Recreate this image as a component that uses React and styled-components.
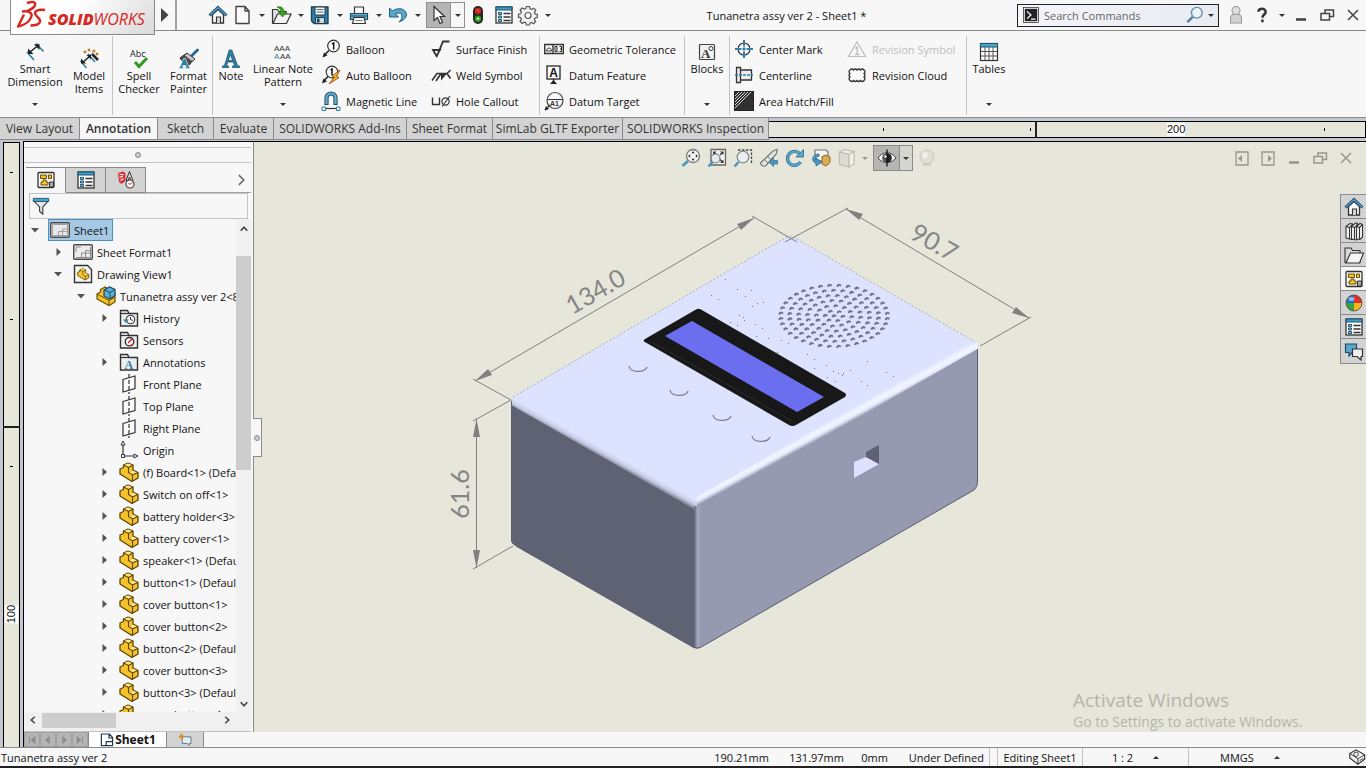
import React, { useState } from "react";
import styled, { createGlobalStyle } from "styled-components";

const INK = "#333333";
const BLUE = "#2f7fa6";
const GOLD = "#f3c22c";

/* ---------- icons, all drawn on a 20 x 20 grid ---------- */

const sheetArt = (
  <>
    <rect x="2" y="2.5" width="16" height="15" rx="1" fill="#f7f7f7" stroke={INK} strokeWidth="1.3" />
    <path d="M4.5 5h6v3.5h-6zM12.5 5h3v3.5h-3zM5 15v-3h2v-2h3v2h2v3z" fill={GOLD} stroke="#6b5000" />
    <path d="M13.5 12h4v5h-4z" fill="#aaa" stroke={INK} />
  </>
);

const listArt = (
  <>
    <rect x="2" y="2" width="16" height="16" fill="#fdfdfd" stroke={INK} strokeWidth="1.3" />
    <path d="M2 2h16v3H2z" fill="#3f9cc4" stroke="#1f5672" />
    <path d="M4.5 7.5h3v2h-3zM4.5 11h3v2h-3zM4.5 14.5h3v2h-3z" fill="#8cc8e4" stroke="#1f5672" />
    <path d="M9.5 8.5h7M9.5 12h7M9.5 15.5h7" stroke={INK} strokeWidth="1.3" />
  </>
);

const folderArt = (
  <>
    <path d="M1.5 18V2.5h7L10 5.500h8.500V18z" fill="#ededed" stroke={INK} strokeWidth="1.4" />
    <path d="M2 5.500h8" stroke={INK} strokeWidth="1.2" />
  </>
);

const partArt = (
  <>
    <path d="M1 7l3.5-1.5V3L9 1l5 2v5l5 2.500V16l-6 3.500L1 12z" fill={GOLD} stroke="#5f4600" strokeWidth="1.3" strokeLinejoin="round" />
    <path d="M5 3l4-1.500L13 3 9.500 4.900zM10.500 10.500L14 8.700l4 1.900-4.500 1.900z" fill="#fbe48e" />
    <path d="M4.500 3l5 2.500L14 3M9.500 5.500v5l4 2.500 5.500-2.500M13.500 13v6" fill="none" stroke="#5f4600" strokeWidth="1.1" />
  </>
);

const icons = {
  home: (
    <>
      <path d="M4.5 9.500V18h11V9.500L10 4.500z" fill="#fbfbfb" stroke={INK} strokeWidth="1.3" />
      <path d="M8.500 18v-6h4v6" fill="#ddd" stroke={INK} strokeWidth="1.2" />
      <path d="M1.500 10.500L10 2.500l8.500 8" fill="none" stroke="#1c4c66" strokeWidth="3" />
      <path d="M2 10L10 2.700l8 7.300" fill="none" stroke="#4f9dc0" strokeWidth="1.4" />
    </>
  ),
  doc: <path d="M4 1.500h9L17 6v12.500H4zM13 1.500V6h4" fill="#fbfbfb" stroke="#444" strokeWidth="1.4" strokeLinejoin="round" />,
  open: (
    <>
      <path d="M1.500 18V4.500h5l1.500 2h7V18z" fill="#dedede" stroke={INK} strokeWidth="1.2" />
      <path d="M2 18.500L6.500 9H20l-4.500 9.500z" fill="#f4f4f4" stroke={INK} strokeWidth="1.2" />
      <path d="M6 2c4-1 7 1 7 5h3l-4.500 5L7.500 7H10C10 4.500 8.500 3 6 2z" fill="#3aa524" stroke="#20760f" strokeWidth=".7" />
    </>
  ),
  save: (
    <>
      <path d="M1.500 2H18v16.500H4L1.500 16z" fill="#2f7fa6" stroke="#173f55" strokeWidth="1.3" />
      <path d="M5 2h10v8H5z" fill="#fafafa" stroke="#173f55" />
      <path d="M6.500 4.500h7M6.500 7h7" stroke="#666" />
      <path d="M5.500 12.500h9v6h-9z" fill="#d5d5d5" stroke="#173f55" />
      <path d="M7 13.500h2.500v4H7z" fill="#173f55" />
    </>
  ),
  print: (
    <>
      <path d="M5.500 9V2h9v7" fill="#fafafa" stroke={INK} strokeWidth="1.2" />
      <path d="M1.500 8.500h17v6h-17z" fill="#67afd0" stroke="#1c4c66" strokeWidth="1.2" />
      <path d="M2.500 11h15" stroke="#1c4c66" />
      <path d="M5 12.500h10l1.500 6h-13z" fill="#fafafa" stroke={INK} strokeWidth="1.1" />
      <path d="M6.500 15.500h7" stroke="#777" />
    </>
  ),
  undo: (
    <path d="M1.500 3v9h9L7.500 9c4-2 7-.5 6.500 3-.5 2-1.500 3.500-3 5 4.500-1.500 7-4 7.500-7C18.500 4 10.500 1.500 4.500 6z" fill="#5ba6cb" stroke="#1f5f80" />
  ),
  pointer: <path d="M5 1.500v14l3.500-3 2.500 6 2.500-1-2.500-6h4.500z" fill="#fff" stroke="#333" strokeWidth="1.2" />,
  lights: (
    <>
      <rect x="5" y="1" width="10" height="18" rx="5" fill="#252525" />
      <circle cx="10" cy="6" r="3.2" fill="#cf2418" />
      <path d="M9 4.500l2 2" stroke="#ff9c93" />
      <circle cx="10" cy="13.7" r="3.2" fill="#2d9b24" />
      <path d="M8.500 13.700h3M10 12.200v3" stroke="#b6ffa5" />
    </>
  ),
  list: listArt,
  gear: (
    <>
      <path d="M8.500 1.500h3l.6 2.300 1.500.6 2.100-1.200 2 2-1.200 2.200.6 1.500 2.200.6v3l-2.300.6-.6 1.500 1.200 2.100-2 2-2.200-1.200-1.500.6-.5 1.900h-3l-.6-2.200-1.500-.6-2.200 1.200-2-2 1.200-2.100-.6-1.500-2.200-.6v-3l2.200-.6.6-1.500-1.200-2.200 2-2 2.200 1.200 1.500-.6z" fill="#f0f0f0" stroke="#555" strokeWidth="1.2" />
      <circle cx="10" cy="10.500" r="3" fill="#fafafa" stroke="#555" strokeWidth="1.2" />
    </>
  ),
  dimension: (
    <>
      <path d="M2 10l7 8M11 1.500l7.500 8" stroke={BLUE} strokeWidth="1.7" />
      <path d="M4.500 10.500L13 3.500" stroke="#222" strokeWidth="1.6" />
      <path d="M3 12V6.500L8.500 12zM14.500 2v6L9 2.500z" fill="#222" />
    </>
  ),
  model: (
    <>
      <path d="M1.500 12l6 7M9 5l7 8" stroke={BLUE} strokeWidth="1.5" />
      <path d="M3 14l8-7" stroke="#222" strokeWidth="1.5" />
      <path d="M2 14.500v-5l5 5zM12 5.500v5L7.500 6z" fill="#222" />
      <path d="M12 4l7 7" stroke="#222" strokeWidth="2.500" />
      <path d="M11 3l2 2" stroke="#fff" strokeWidth="2" />
      <path d="M5 2h2v2H5zM9 0h2v2H9zM14 1h2v2h-2zM17 4h2v2h-2z" fill="#e09a2b" stroke="#a65a12" strokeWidth=".5" />
    </>
  ),
  spell: (
    <>
      <text x="1" y="8" fontSize="9" fontFamily="Open Sans, sans-serif" fill="#222">Abc</text>
      <path d="M6 13l4 4.500L18 9" fill="none" stroke="#2f9a20" strokeWidth="3" />
    </>
  ),
  painter: (
    <>
      <path d="M18.500 1l-6 6" stroke="#2a6e93" strokeWidth="3" strokeLinecap="round" />
      <path d="M8 4l8 6-4 3.500c-1 2-2 3-4 4.500L1 9z" fill="#4d4d4d" stroke="#222" />
      <path d="M8 4.500l7.500 5.500-2.500 2-7-5.500z" fill="#c9c9c9" />
      <path d="M4.500 9.500h2L10 18h1v1.500H6.500V18h1L7 16.500H4L3.500 18h1v1.500H0V18h1z" fill={BLUE} stroke="#f7f7f7" strokeWidth=".6" />
    </>
  ),
  note: (
    <path d="M8.200 1h2.600l5.700 15.500 2 .5v1.500h-7V17l2-.5-1.200-3.500H6.700L5.500 16.500l2 .5v1.500h-6V17l2-.5zM9.300 5.500L7.200 11.500h4.500z" fill={BLUE} stroke="#1d536f" strokeWidth=".8" fillRule="evenodd" />
  ),
  pattern: (
    <g fontSize="8" fontFamily="Liberation Sans, sans-serif" fill="#333">
      <text x="1" y="9">AAA</text>
      <text x="1" y="17" fill={BLUE}>A</text>
      <text x="7" y="17">AA</text>
    </g>
  ),
  balloon: (
    <>
      <circle cx="12.500" cy="7" r="5.800" fill="#fdfdfd" stroke={INK} strokeWidth="1.2" />
      <path d="M12.700 10.500V4L11 5" fill="none" stroke="#111" strokeWidth="1.5" />
      <path d="M8 11.500l-5 5" stroke="#222" strokeWidth="1.6" />
      <path d="M1.500 18.500l1.500-5 3.500 3z" fill="#222" />
    </>
  ),
  autoBalloon: (
    <>
      <circle cx="11" cy="7" r="5.800" fill="#fdfdfd" stroke={INK} strokeWidth="1.2" />
      <path d="M11 10.500V4L9.500 5" fill="none" stroke="#111" strokeWidth="1.5" />
      <path d="M7 11.500l-5 5" stroke="#222" strokeWidth="1.6" />
      <path d="M1 18.500l1.500-5 3.500 3z" fill="#222" />
      <path d="M19 5l-8 6 2.500 1L8 19l10-6.500-2.500-1z" fill="#f6b32c" stroke="#9a4e09" strokeWidth=".9" />
    </>
  ),
  magnet: (
    <>
      <path d="M5.500 14V7c0-6 9-6 9 0v7" fill="none" stroke="#1c4c66" strokeWidth="4.2" />
      <path d="M5.500 13V7c0-6 9-6 9 0v6" fill="none" stroke="#67afd0" strokeWidth="2.2" />
      <path d="M3.500 17.500h13" stroke={INK} strokeWidth="1.2" />
      <path d="M1 16h3.500v3.500H1zM15.500 16H19v3.500h-3.500z" fill="#fff" stroke={BLUE} />
    </>
  ),
  surface: <path d="M2 11h7l-3.500 6zM5.500 18L12 2.500h6.500" fill="none" stroke="#333" strokeWidth="1.8" />,
  weld: (
    <>
      <path d="M1 15.500l5-7h10M5 16l5-7.500M19.500 5L16 8.500l3.500 5" fill="none" stroke="#333" strokeWidth="1.6" />
      <path d="M10 8.500h6l-6 7z" fill="#333" />
    </>
  ),
  hole: (
    <>
      <path d="M1.500 6.500v7h7v-7" fill="none" stroke="#333" strokeWidth="1.4" />
      <circle cx="14.500" cy="10.500" r="3.6" fill="none" stroke="#333" strokeWidth="1.2" />
      <path d="M11 15.500L19 5" stroke="#333" strokeWidth="1.1" />
    </>
  ),
  tolerance: (
    <>
      <path d="M.7 5.500h18.600v9H.7zM9 5.500v9" fill="#fafafa" stroke={INK} strokeWidth="1.4" />
      <path d="M2.500 12c0-4 5-4 5 0z" fill="none" stroke="#333" />
      <path d="M11 7.500h2v5h-2zM14 12.500v.5M15.500 7.500h2v5h-2M16 10h1.500" fill="none" stroke="#222" />
    </>
  ),
  datumFeature: (
    <>
      <rect x="3" y="1" width="13" height="13" fill="#fafafa" stroke={INK} strokeWidth="1.4" />
      <text x="5.200" y="11.800" fontSize="12" fontWeight="700" fontFamily="Liberation Sans, sans-serif" fill="#111">A</text>
      <path d="M9.500 14v3" stroke="#222" strokeWidth="1.3" />
      <path d="M6 19l3.500-4 3.500 4z" fill="#222" />
    </>
  ),
  datumTarget: (
    <>
      <circle cx="11" cy="9.500" r="8" fill="#f7f7f7" stroke="#444" strokeWidth="1.2" />
      <path d="M3 8.500h16M6 14l-5 5" stroke="#333" strokeWidth="1.2" />
      <path d="M.5 19.500L2 15l3 3z" fill="#222" />
      <text x="6" y="15" fontSize="7" fontWeight="700" fontFamily="Liberation Sans, sans-serif" fill="#333">A1</text>
    </>
  ),
  blocks: (
    <>
      <rect x="2.500" y="2.500" width="15" height="15" rx="1" fill="#f1f1f1" stroke="#444" strokeWidth="1.2" />
      <text x="4" y="15.500" fontSize="13" fontWeight="700" fontFamily="Liberation Serif, serif" fill="#333">A</text>
      <circle cx="14" cy="6.500" r="2" fill="#fff" stroke="#333" />
    </>
  ),
  centerMark: (
    <>
      <circle cx="10" cy="10" r="6" fill="none" stroke="#333" strokeWidth="1.2" />
      <path d="M10 1v6.500M10 12.500V19M1 10h6.500M12.500 10H19M10 8.500v3M8.500 10h3" stroke={BLUE} strokeWidth="2" />
    </>
  ),
  centerline: (
    <>
      <path d="M2.500 2.500h4v15h-4zM6.500 5h11v10h-11z" fill="#ececec" stroke="#333" strokeWidth="1.3" />
      <path d="M1 10h18" stroke={BLUE} strokeWidth="1.4" strokeDasharray="3 1" />
    </>
  ),
  hatch: (
    <>
      <rect x=".5" y=".5" width="19" height="19" fill="#303030" stroke="#222" />
      <path d="M1 5l4-4M1 8l7-7M1 11L11 1M1 14L14 1M1 17L17 1" stroke="#d8d8d8" />
    </>
  ),
  revSymbol: (
    <>
      <path d="M10 3l8.500 14.500h-17z" fill="none" stroke="#bdbdbd" strokeWidth="1.2" />
      <path d="M10.200 15.500V8L8.500 9.500M8 15.500h4.500" fill="none" stroke="#bdbdbd" strokeWidth="1.3" />
    </>
  ),
  cloud: (
    <path d="M3 5q1.750-2 3.500 0q1.750-2 3.500 0q1.750-2 3.500 0q1.750-2 3.500 0q2 1.750 0 3.500q2 1.750 0 3.500q2 1.750 0 3.500q-1.750 2-3.500 0q-1.750 2-3.500 0q-1.750 2-3.500 0q-1.750 2-3.500 0q-2-1.750 0-3.500q-2-1.750 0-3.500q-2-1.750 0-3.500z" fill="#fafafa" stroke="#333" strokeWidth="1.3" />
  ),
  tables: (
    <>
      <rect x="1.500" y="1.500" width="17" height="17" fill="#fdfdfd" stroke={INK} strokeWidth="1.2" />
      <path d="M1.500 1.500h17V5h-17z" fill="#47a5cb" stroke="#1f5672" />
      <path d="M2 9.500h16M2 14h16M6 5v13M10 5v13M14 5v13" stroke="#555" />
    </>
  ),
  command: (
    <>
      <rect x="2.500" y="2.500" width="15" height="15" fill="#222" stroke="#fff" />
      <rect x="1.700" y="1.700" width="16.600" height="16.600" fill="none" stroke="#222" strokeWidth=".8" />
      <path d="M5.500 6l4.500 4-4.500 4M10 14.500h5" fill="none" stroke="#fff" strokeWidth="1.4" />
    </>
  ),
  magnify: (
    <>
      <circle cx="12" cy="7.500" r="6" fill="#eaf4fb" stroke="#6d8fae" strokeWidth="1.6" />
      <path d="M7.500 12l-6 6" stroke="#4f7da4" strokeWidth="2.600" />
    </>
  ),
  person: (
    <>
      <path d="M4.500 18v-4.500c0-3 2-4.500 5.500-4.500s5.500 1.500 5.500 4.500V18z" fill="#d2d2d2" stroke="#999" strokeWidth="1.1" />
      <circle cx="10" cy="5.500" r="4" fill="#dedede" stroke="#999" strokeWidth="1.1" />
    </>
  ),
  help: <path d="M6 6.500c0-5 8.500-4.500 8 .5-.3 2.500-3.500 2.700-3.500 6M10.500 15v3" fill="none" stroke="#333" strokeWidth="2.800" />,
  minimize: <path d="M5 14.500h10" stroke="currentColor" strokeWidth="2.600" />,
  restore: (
    <path d="M4 8.500h8.500V15H4zM8 8V5h8.500v6.500H13" fill="none" stroke="currentColor" strokeWidth="1.5" />
  ),
  close: <path d="M5 5l10 10M15 5L5 15" stroke="currentColor" strokeWidth="1.5" />,
  dockLeft: (
    <>
      <path d="M4 4h12v13H4z" fill="none" stroke="currentColor" strokeWidth="1.3" />
      <path d="M6 10.500L10 7v7z" fill="currentColor" />
    </>
  ),
  dockRight: (
    <>
      <path d="M4 4h12v13H4z" fill="none" stroke="currentColor" strokeWidth="1.3" />
      <path d="M14 10.500L10 7v7z" fill="currentColor" />
    </>
  ),
  zoomFit: (
    <>
      <path d="M7 13l-5.500 5" stroke="#4b98bf" strokeWidth="2.800" />
      <circle cx="12" cy="8" r="6.500" fill="#f3f5f2" stroke="#777" strokeWidth="1.3" />
      <path d="M12 3l1.700 2.200h-3.400zM12 13l1.700-2.200h-3.400zM7 8l2.200-1.700v3.400zM17 8l-2.200-1.700v3.400z" fill="#333" />
    </>
  ),
  zoomArea: (
    <>
      <path d="M4 1.500h14.500V17H4z" fill="#f3f3f0" stroke="#666" strokeWidth="1.3" />
      <path d="M6 3.500h3.500L6 7zM16.500 3.500V7L13 3.500zM16.500 15v-3.500L13 15z" fill="#333" />
      <path d="M7 4.500L9.500 7M15.500 4.500L13 7M15.500 14L13 11.500" stroke="#333" strokeWidth="1.3" />
      <path d="M5.500 14l-4 4.500" stroke="#4b98bf" strokeWidth="2.600" />
      <circle cx="8.500" cy="10.500" r="4.500" fill="#dfe9ee" stroke="#777" strokeWidth="1.2" />
    </>
  ),
  zoomSelect: (
    <>
      <path d="M5 2h13.500v14" fill="none" stroke="#444" strokeWidth="1.3" strokeDasharray="2.500 1.500" />
      <path d="M5.500 14l-4 4.500" stroke="#4b98bf" strokeWidth="2.600" />
      <circle cx="10" cy="9" r="5.800" fill="#e9eff0" stroke="#888" strokeWidth="1.3" />
    </>
  ),
  prevView: (
    <>
      <path d="M1.500 15L14 3l4-1.500-.5 4L7 17.500c-2 1.500-5.500 0-5.500-2.500z" fill="#e4e4e0" stroke="#777" strokeWidth="1.2" />
      <path d="M8.500 8l3.500 4M5 11l4 4" stroke="#777" />
      <path d="M18.500 12.500v3.500h-4v2.500L10 14.200l4.500-4.200v2.500z" fill="#4b98bf" stroke="#2a6c8e" strokeWidth=".7" />
    </>
  ),
  rotate: (
    <>
      <path d="M14.500 5.500A7 7 0 1015.500 14" fill="none" stroke="#2a6c8e" strokeWidth="3.400" />
      <path d="M14.500 5.500A7 7 0 1015.500 14" fill="none" stroke="#5ba6cb" strokeWidth="2" />
      <path d="M18.500 1.500v7.500H11z" fill="#5ba6cb" stroke="#2a6c8e" strokeWidth=".8" />
    </>
  ),
  section: (
    <>
      <path d="M4 2h11l2 2v9H4z" fill="#f7f7f4" stroke="#777" strokeWidth="1.2" />
      <path d="M11 8.500L15 7l4 2v5.500L15 18l-4-2z" fill="#d9ad52" stroke="#8b6828" />
      <path d="M8 6C1 6-.5 13 5 15.500V18l6-4-6-4v2.500C3.500 10.500 5 8.500 8 8.500z" fill="#4b98bf" stroke="#2a6c8e" strokeWidth=".8" />
    </>
  ),
  cube: (
    <g stroke="#bdbdb4" strokeWidth="1.2">
      <path d="M2.500 4l5-2.500 9.500 2-5 3z" fill="#ededE6" />
      <path d="M2.500 4l9.500 2.500V19l-9.500-2.500z" fill="#dcdcd5" />
      <path d="M12 6.500l5-3V16l-5 3z" fill="#f1f1ea" />
    </g>
  ),
  eye: (
    <>
      <path d="M1 10c4.500-7 13.500-7 18 0-4.500 6-13.500 6-18 0z" fill="#f5f5f5" stroke="#444" />
      <path d="M10 5.200a4.800 4.800 0 000 9.600z" fill="#555" />
      <path d="M10 5.200a4.800 4.800 0 010 9.600z" fill="#222" />
      <path d="M10 1.500v17" stroke="#111" strokeWidth="1.3" />
      <circle cx="8.500" cy="8.500" r="1.200" fill="#eee" />
    </>
  ),
  sphere: (
    <>
      <circle cx="10" cy="9" r="7" fill="#dedfd6" stroke="#c9c9c0" />
      <circle cx="8" cy="7" r="3" fill="#eeeee8" />
      <path d="M6 16.500h8" stroke="#c9c9c0" strokeWidth="2" />
    </>
  ),
  books: (
    <g fill="#f4f4f4" stroke={INK} strokeWidth="1.1">
      <path d="M2 5.500l4-3 2.500.5v15.500h-1L2 17z" />
      <path d="M7.500 5.500l4-3.500 2 .5v15.500L12 19l-4.500-1z" />
      <path d="M12.500 5.500l3.500-3 2.500 1V16L16 18.500l-3.500-.5z" />
      <path d="M2 5.500l3.500 1L8.500 3M5.500 6.500V18M7.500 5.500l3 1L13.500 3M10.500 6.500v12M12.500 5.500l3 1 3-3M15.500 6.500v12" fill="none" />
    </g>
  ),
  folderOpen: (
    <>
      <path d="M1 17.500V3h6l1.500 2.500H16v12z" fill="#d7d7d7" stroke={INK} strokeWidth="1.1" />
      <path d="M2 18L6.500 8h13l-4 10z" fill="#f5f5f5" stroke={INK} strokeWidth="1.1" />
    </>
  ),
  sheet: sheetArt,
  appearance: (
    <>
      <path d="M10 10V2a8 8 0 00-8 8z" fill="#2b6cc9" />
      <path d="M10 10V2a8 8 0 018 8z" fill="#e0302a" />
      <path d="M10 10h8a8 8 0 01-8 8z" fill="#f2b822" />
      <path d="M10 10v8a8 8 0 01-8-8z" fill="#35a53c" />
      <circle cx="10" cy="10" r="8" fill="none" stroke="#444" strokeWidth=".8" />
      <ellipse cx="7.500" cy="6" rx="3" ry="2" fill="#fff" opacity=".5" />
    </>
  ),
  chat: (
    <>
      <path d="M1.500 3h11v8.500H8L5 15v-3.500H1.500z" fill="#5ba6cb" stroke="#1c4c66" strokeWidth="1.2" />
      <path d="M8.500 8h10v7.500H17V19l-4-3.500H8.500z" fill="#f0f0f0" stroke={INK} strokeWidth="1.2" />
    </>
  ),
  dimxpert: (
    <>
      <path d="M2 3l5-1.500L9.500 3v8L5.500 14 3 12z" fill="#de2f35" />
      <path d="M3.500 4.500h4M3.500 7.500L7 6M4.500 10.500l3-2" fill="none" stroke="#fff" strokeWidth="1.2" />
      <path d="M13.500 1.500l3.500 9h-2L13.500 7 12 10.500h-2z" fill="#d9d9d9" stroke="#333" />
      <circle cx="14" cy="14" r="4" fill="#f4f4f4" stroke="#444" strokeWidth="1.2" />
      <path d="M12.500 13l1.500 1.500 2.500-2.500" fill="none" stroke="#d22" />
    </>
  ),
  funnel: (
    <>
      <path d="M2 4.500h16L12 11v8l-3.500-3v-5z" fill="#e6e6e6" stroke={INK} strokeWidth="1.2" />
      <path d="M1.500 1.500h17V5h-17z" fill="#4aa3ca" stroke="#1f5672" />
    </>
  ),
  treeSheet: (
    <>
      <rect x=".7" y="2.700" width="18.600" height="14.600" rx="1" fill="#e8e8e8" stroke="#4b4b4b" strokeWidth="1.4" />
      <path d="M2.500 4.500h15v11h-15zM8.500 15.500v-4h9M12.500 9v6.500M12.500 9h5" fill="none" stroke="#a0a0a0" />
    </>
  ),
  treeFormat: (
    <>
      <rect x=".7" y="2.700" width="18.600" height="14.600" rx="1" fill="#ececec" stroke="#4b4b4b" strokeWidth="1.4" />
      <path d="M3 10V5h5M8.500 15.500V11h9M12.500 8.500v7M12.500 8.500h5M3 15.500h14.500V5" fill="none" stroke="#8d8d8d" />
    </>
  ),
  drawingView: (
    <>
      <path d="M1.500 1.500h13l4 4v13h-17z" fill="#f5f5f5" stroke={INK} strokeWidth="1.4" />
      <g transform="translate(4 4) scale(.62)">{partArt}</g>
    </>
  ),
  assembly: (
    <>
      <path d="M1 8l3.500-2V3.500L9 1l10 6v9l-6 3.500L1 13z" fill={GOLD} stroke="#705000" strokeWidth="1.2" />
      <path d="M1 8l12 6.500 6-3.500M13 14.500v5" fill="none" stroke="#705000" />
      <path d="M8 4l5.500-3L19 3.500v6L14 13l-6-3z" fill="#5fb0d8" stroke="#1c4c66" strokeWidth="1.2" />
      <path d="M8 4l6 2.500V13M14 6.500l5-3" fill="none" stroke="#1c4c66" />
    </>
  ),
  history: (
    <>
      {folderArt}
      <circle cx="11.500" cy="11.500" r="4.200" fill="#fff" stroke="#555" strokeWidth="1.3" />
      <path d="M11.500 9v2.500l2.500 1" fill="none" stroke="#333" />
      <path d="M4 11.500h6L7 15z" fill={BLUE} />
    </>
  ),
  sensors: (
    <>
      {folderArt}
      <circle cx="10.500" cy="11.700" r="4.200" fill="#fff" stroke="#333" strokeWidth="1.4" />
      <path d="M9 13l4-4" stroke="#d22" strokeWidth="1.5" />
      <path d="M10 15.500h4v-2z" fill="#d22" />
    </>
  ),
  annotations: (
    <>
      {folderArt}
      <text x="5.500" y="16.500" fontSize="12" fontWeight="700" fontFamily="Liberation Serif, serif" fill={BLUE}>A</text>
    </>
  ),
  plane: (
    <>
      <path d="M4 5.500L16 2v12.500L4 18z" fill="#fafafa" stroke="#333" strokeWidth="1.2" />
      <path d="M10 0v20" stroke="#333" strokeWidth="1.2" strokeDasharray="4 2" />
    </>
  ),
  origin: (
    <>
      <path d="M4 4v12M4 16h12" stroke="#333" strokeWidth="1.2" />
      <path d="M4 1l2 4H2zM19 16l-4-2v4zM2.500 14.500h3v3h-3z" fill="#fff" stroke="#333" />
    </>
  ),
  part: partArt,
  sheetTab: (
    <path d="M3 2.500h10L17 7v10H3zM12.500 3v4.500H17M9 17v-5h8" fill="#fff" stroke="#1d3a56" strokeWidth="1.5" />
  ),
  addSheet: (
    <>
      <path d="M6 5.500h12.500V15H16v2.500L13.500 15H6z" fill="#e4eef2" stroke="#456d84" strokeWidth="1.2" />
      <path d="M5 1v8M1 5h8M2.500 2.500l5 5M7.500 2.500l-5 5" stroke="#e08b1c" strokeWidth="1.5" />
    </>
  ),
  tag: (
    <>
      <path d="M2 6l7-4 9.500 5.500v5L11 18l-9-7z" fill="#f1f1f1" stroke="#333" strokeWidth="1.3" />
      <path d="M2 6l9 6v6M11 12l7.500-4.500" fill="none" stroke="#333" />
      <circle cx="9" cy="7" r="2.500" fill="none" stroke="#333" />
      <path d="M13 14l4-2.500" stroke="#333" />
    </>
  ),
  chevronRight: <path d="M7 3l7 7-7 7" fill="none" stroke="#666" strokeWidth="2.200" />,
  chevronLeft: <path d="M13 4.500L7 10l6 5.500" fill="none" stroke="#444" strokeWidth="2.600" />,
  chevronUp: <path d="M4.500 13L10 7l5.500 6" fill="none" stroke="#444" strokeWidth="2.600" />,
  chevronDown: <path d="M4.500 7l5.500 6 5.500-6" fill="none" stroke="#444" strokeWidth="2.600" />,
  first: <path d="M15 4v12l-7-6zM5.500 4v12" fill="#8e8e8e" stroke="#8e8e8e" strokeWidth="1.5" />,
  prev: <path d="M13 3v14l-8-7z" fill="#8e8e8e" />,
  next: <path d="M7 3v14l8-7z" fill="#8e8e8e" />,
  last: <path d="M5 4v12l7-6zM14.500 4v12" fill="#8e8e8e" stroke="#8e8e8e" strokeWidth="1.5" />,
};

const Icon = ({ name, size = 20 }) => (
  <IconSvg width={size} height={size} viewBox="0 0 20 20" aria-hidden="true">
    {icons[name]}
  </IconSvg>
);

/* ---------- data ---------- */

const quickTools = [
  { name: "home" },
  { name: "doc", menu: true },
  { name: "open", menu: true },
  { name: "save", menu: true },
  { name: "print", menu: true },
  { name: "undo", menu: true },
];

const tabs = [
  ["View Layout", 80],
  ["Annotation", 78],
  ["Sketch", 56],
  ["Evaluate", 60],
  ["SOLIDWORKS Add-Ins", 133],
  ["Sheet Format", 86],
  ["SimLab GLTF Exporter", 130],
  ["SOLIDWORKS Inspection", 146],
];

const tree = [
  { level: 0, arrow: "down", icon: "treeSheet", label: "Sheet1", selected: true },
  { level: 1, arrow: "right", icon: "treeFormat", label: "Sheet Format1" },
  { level: 1, arrow: "down", icon: "drawingView", label: "Drawing View1" },
  { level: 2, arrow: "down", icon: "assembly", label: "Tunanetra assy ver 2<8>" },
  { level: 3, arrow: "right", icon: "history", label: "History" },
  { level: 3, icon: "sensors", label: "Sensors" },
  { level: 3, arrow: "right", icon: "annotations", label: "Annotations" },
  { level: 3, icon: "plane", label: "Front Plane" },
  { level: 3, icon: "plane", label: "Top Plane" },
  { level: 3, icon: "plane", label: "Right Plane" },
  { level: 3, icon: "origin", label: "Origin" },
  { level: 3, arrow: "right", icon: "part", label: "(f) Board<1> (Default)" },
  { level: 3, arrow: "right", icon: "part", label: "Switch on off<1>" },
  { level: 3, arrow: "right", icon: "part", label: "battery holder<3>" },
  { level: 3, arrow: "right", icon: "part", label: "battery cover<1>" },
  { level: 3, arrow: "right", icon: "part", label: "speaker<1> (Default)" },
  { level: 3, arrow: "right", icon: "part", label: "button<1> (Default)" },
  { level: 3, arrow: "right", icon: "part", label: "cover button<1>" },
  { level: 3, arrow: "right", icon: "part", label: "cover button<2>" },
  { level: 3, arrow: "right", icon: "part", label: "button<2> (Default)" },
  { level: 3, arrow: "right", icon: "part", label: "cover button<3>" },
  { level: 3, arrow: "right", icon: "part", label: "button<3> (Default)" },
  { level: 3, arrow: "right", icon: "part", label: "cover button<4>" },
];

const viewTools = ["zoomFit", "zoomArea", "zoomSelect", "prevView", "rotate", "section"];
const windowTools = ["dockLeft", "dockRight", "minimize", "restore", "close"];
const taskTools = ["home", "books", "folderOpen", "sheet", "appearance", "list", "chat"];

// speaker grille: rings of holes, six more on every ring
const holes = [[834, 316]];
for (let ring = 1; ring <= 6; ring++) {
  for (let i = 0; i < ring * 6; i++) {
    const a = (i / (ring * 6)) * Math.PI * 2 + 0.09;
    holes.push([834 + Math.cos(a) * ring * 8.9, 316 + Math.sin(a) * ring * 5.1]);
  }
}

const specks = [
  [725, 279], [737, 289], [745, 296], [751, 290], [711, 295], [718, 299], [752, 306], [757, 303],
  [763, 302], [743, 317], [739, 315], [730, 322], [737, 325], [744, 320], [755, 324], [762, 328],
  [768, 338], [756, 336], [781, 340], [788, 343], [777, 352], [807, 354], [814, 359], [826, 365],
  [833, 371], [843, 373], [842, 375], [838, 373], [850, 370], [861, 381], [867, 361], [867, 385],
  [886, 372], [893, 376], [827, 377], [835, 381], [814, 368],
];

/* ---------- drawing view ---------- */

const Model = () => (
  <ModelSvg viewBox="254 142 1112 590" role="img" aria-label="Drawing View1">
    <defs>
      <linearGradient id="edgeRight" gradientUnits="userSpaceOnUse" x1="832" y1="418" x2="838" y2="429">
        <stop offset="0" stopColor="#dde3ff" />
        <stop offset=".45" stopColor="#f2f7ff" />
        <stop offset=".7" stopColor="#e3e9fb" />
        <stop offset="1" stopColor="#969ab1" />
      </linearGradient>
      <linearGradient id="edgeLeft" gradientUnits="userSpaceOnUse" x1="606" y1="450" x2="601" y2="459">
        <stop offset="0" stopColor="#dde3ff" />
        <stop offset=".45" stopColor="#c6cce4" />
        <stop offset="1" stopColor="#5f6272" />
      </linearGradient>
      <linearGradient id="edgeFront" x1="0" x2="1" y1="0" y2="0">
        <stop offset="0" stopColor="#5f6272" />
        <stop offset=".5" stopColor="#a5a9bf" />
        <stop offset="1" stopColor="#969ab1" />
      </linearGradient>
    </defs>
    <path d="M516 395L785 238Q790 236 795 238L973 341Q977 343 977 349L697 512L511 406V401z" fill="#dde3ff" />
    <path d="M511 403L697 509V648.500Q694 648.500 691 646L514 545Q511 543 511 540z" fill="#5f6272" />
    <path d="M697 509L977 348V484Q977 488 974 490L700 648Q698 649 697 648.500z" fill="#969ab1" />
    <path d="M512 397L697 501V511L511 405V399z" fill="url(#edgeLeft)" />
    <path d="M697 497L974 339Q978 342 977.500 349L697 510z" fill="url(#edgeRight)" />
    <path d="M694 506h7v141l-4 1.500-3-1.500z" fill="url(#edgeFront)" />
    <path d="M511.500 401V541L516 546L691 646Q697 650 703 646L974 490Q977.500 487 977.500 482V349" fill="none" stroke="#5b5e70" />
    <path d="M513 397L785 238Q790 235 795 238L975 342" fill="none" stroke="#a7abb9" strokeDasharray="2 2" />

    <g fill="#6f7386">
      {holes.map(([x, y], i) => (
        <path key={i} d={`M${x - 2.5} ${y + 1}q.3-2.500 2.700-2.700q1.800 0 2.600 1.500l-1.300 1.300l-1-1l-1 1.500z`} />
      ))}
      {specks.map(([x, y]) => (
        <rect key={`${x}-${y}`} x={x} y={y} width="1" height="1" />
      ))}
    </g>

    <path d="M644 341.500Q643 340 645 339L696 309.500Q698 308 701 309.500L845 393Q847 395 845 397L796 425Q792 427 789 425z" fill="#181818" />
    <path d="M652 342L792 421" fill="none" stroke="#2c2c2c" />
    <path d="M665 336L692 321L824 397L797 412z" fill="#6c6ef0" />

    <g fill="none" stroke="#7b7f94" strokeWidth="1.3">
      <path d="M629 366c1 7 16 7 18 1" />
      <path d="M670 390c1 7 16 7 18 1" />
      <path d="M713 415c1 7 16 7 18 1" />
      <path d="M752 436c1 7 16 7 18 1" />
    </g>
    <path d="M854 462L866 457L879 464L854 478z" fill="#dde3ff" />
    <path d="M866 452L879 445V464L866 457z" fill="#5f6272" />

    <g fill="none" stroke="#808080">
      <path d="M475 381L754 218M473 379L511 400M752 216L797 242" />
      <path d="M846 209L1029 318M785 242L848 208M980 346L1031 317" />
      <path d="M476.500 419V568M473 421L511 400M473 569L513 546" />
    </g>
    <g fill="#808080">
      <path d="M475 381L488 369L492 375zM754 218L741 230L737 224z" />
      <path d="M846 209L863 214L859 220zM1029 318L1012 313L1016 307z" />
      <path d="M476.500 419L480 437H473zM476.500 568L480 550H473z" />
    </g>
    <DimText transform="translate(600 299) rotate(-30)">134.0</DimText>
    <DimText transform="translate(930 250) rotate(30)">90.7</DimText>
    <DimText transform="translate(469 494) rotate(-90)">61.6</DimText>
  </ModelSvg>
);

/* ---------- app ---------- */

const Tool = ({ icon, lines, menu, width }) => (
  <BigTool $w={width} $menu={menu}>
    <Icon name={icon} />
    {lines.map((line) => (
      <span key={line}>{line}</span>
    ))}
    {menu && <Caret $bottom />}
  </BigTool>
);

const Row = ({ icon, label, disabled }) => (
  <SmallTool disabled={disabled}>
    <Icon name={icon} />
    {label}
  </SmallTool>
);

export default function App() {
  const [activeTab, setActiveTab] = useState("Annotation");
  const [search, setSearch] = useState("");
  const [filter, setFilter] = useState("");

  return (
    <Window>
      <GlobalStyle />
      <TitleBar>
        <LogoBox>
          <svg width="30" height="30" viewBox="0 0 30 30" aria-hidden="true">
            <g fill="none" stroke="#d5281f" strokeWidth="2.400" strokeLinejoin="round">
              <path d="M11 3c6-2 9-1 8 2C18 8 15 9.500 11 11" />
              <path d="M6 11.500c8-1 11.500 2 8.500 7C12 23 7 25.500 2 26.500l6-12" />
              <path d="M29 10c-8-1-11 1.500-9.500 4.500C21 17.500 25 19 24 22c-1 2.500-4.500 3.500-9.500 3.500" />
            </g>
          </svg>
          <Brand>
            <b>SOLID</b>WORKS
          </Brand>
        </LogoBox>
        <Expander aria-label="Show menu">
          <svg width="8" height="14" viewBox="0 0 8 14">
            <path d="M0 0l7.500 7L0 14z" fill="#444" />
          </svg>
        </Expander>
        <QuickBar>
          {quickTools.map((tool) => (
            <React.Fragment key={tool.name}>
              <QuickButton aria-label={tool.name} $single={!tool.menu}>
                <Icon name={tool.name} />
              </QuickButton>
              {tool.menu && (
                <CaretButton aria-label={`${tool.name} menu`}>
                  <Caret />
                </CaretButton>
              )}
            </React.Fragment>
          ))}
          <SelectGroup>
            <button aria-label="Select">
              <Icon name="pointer" />
            </button>
            <button aria-label="Select menu">
              <Caret />
            </button>
          </SelectGroup>
          <QuickButton aria-label="Rebuild" $single>
            <Icon name="lights" />
          </QuickButton>
          <QuickButton aria-label="File properties" $single>
            <Icon name="list" />
          </QuickButton>
          <QuickButton aria-label="Options">
            <Icon name="gear" />
          </QuickButton>
          <CaretButton aria-label="Options menu">
            <Caret />
          </CaretButton>
        </QuickBar>
        <DocTitle>Tunanetra assy ver 2 - Sheet1 *</DocTitle>
        <SearchBox>
          <Icon name="command" size={18} />
          <input
            aria-label="Search Commands"
            placeholder="Search Commands"
            value={search}
            onChange={(e) => setSearch(e.target.value)}
          />
          <Icon name="magnify" size={18} />
          <Caret />
        </SearchBox>
        <WindowButtons>
          <button aria-label="Login">
            <Icon name="person" />
          </button>
          <button aria-label="Help">
            <Icon name="help" size={18} />
          </button>
          <CaretButton aria-label="Help menu">
            <Caret />
          </CaretButton>
          <button aria-label="Minimize">
            <Icon name="minimize" />
          </button>
          <button aria-label="Restore">
            <Icon name="restore" />
          </button>
          <button aria-label="Close">
            <Icon name="close" />
          </button>
        </WindowButtons>
      </TitleBar>

      <Ribbon>
        <Group $w={113}>
          <Tool icon="dimension" lines={["Smart", "Dimension"]} menu width={70} />
          <Tool icon="model" lines={["Model", "Items"]} width={38} />
        </Group>
        <Group>
          <Tool icon="spell" lines={["Spell", "Checker"]} width={52} />
          <Tool icon="painter" lines={["Format", "Painter"]} width={47} />
        </Group>
        <Group>
          <Tool icon="note" lines={["Note"]} width={36} />
          <Tool icon="pattern" lines={["Linear Note", "Pattern"]} menu width={68} />
          <Column $w={110}>
            <Row icon="balloon" label="Balloon" />
            <Row icon="autoBalloon" label="Auto Balloon" />
            <Row icon="magnet" label="Magnetic Line" />
          </Column>
          <Column $w={112}>
            <Row icon="surface" label="Surface Finish" />
            <Row icon="weld" label="Weld Symbol" />
            <Row icon="hole" label="Hole Callout" />
          </Column>
        </Group>
        <Group>
          <Column $w={144}>
            <Row icon="tolerance" label="Geometric Tolerance" />
            <Row icon="datumFeature" label="Datum Feature" />
            <Row icon="datumTarget" label="Datum Target" />
          </Column>
        </Group>
        <Group>
          <Tool icon="blocks" lines={["Blocks"]} menu width={44} />
        </Group>
        <Group>
          <Column $w={113}>
            <Row icon="centerMark" label="Center Mark" />
            <Row icon="centerline" label="Centerline" />
            <Row icon="hatch" label="Area Hatch/Fill" />
          </Column>
          <Column $w={123}>
            <Row icon="revSymbol" label="Revision Symbol" disabled />
            <Row icon="cloud" label="Revision Cloud" />
          </Column>
        </Group>
        <Group $last>
          <Tool icon="tables" lines={["Tables"]} menu width={44} />
        </Group>
      </Ribbon>

      <TabRow>
        {tabs.map(([label, width]) => (
          <Tab key={label} $w={width} $active={label === activeTab} onClick={() => setActiveTab(label)}>
            {label}
          </Tab>
        ))}
        <TopRuler>
          <TickX $at={114} />
          <TickX $at={261} />
          <Split $at={266} />
          <RulerLabel $at={398}>200</RulerLabel>
          <TickX $at={555} />
        </TopRuler>
      </TabRow>

      <Main>
        <SideRulerWrap>
          <SideRuler>
            <TickY $at={29} />
            <TickY $at={176} />
            <SplitY $at={283} />
            <TickY $at={323} />
            <SideLabel $at={462}>100</SideLabel>
          </SideRuler>
        </SideRulerWrap>
        <Stack>
          <Workspace>
            <Panel>
              <PanelGrip>
                <i />
              </PanelGrip>
              <PanelTabs>
                <PanelTab $active aria-label="FeatureManager">
                  <Icon name="sheet" />
                </PanelTab>
                <PanelTab aria-label="Properties">
                  <Icon name="list" />
                </PanelTab>
                <PanelTab aria-label="DimXpert">
                  <Icon name="dimxpert" />
                </PanelTab>
                <MoreButton aria-label="More tabs">
                  <Icon name="chevronRight" size={14} />
                </MoreButton>
              </PanelTabs>
              <FilterBox>
                <Icon name="funnel" size={18} />
                <input aria-label="Filter" value={filter} onChange={(e) => setFilter(e.target.value)} />
              </FilterBox>
              <TreeArea>
                <Tree>
                  {tree.map((node) => (
                    <TreeRow key={node.label + node.icon} $level={node.level}>
                      <TreeArrow viewBox="0 0 12 12" aria-hidden="true">
                        {node.arrow === "down" && <path d="M2 4h8L6 8.500z" fill="#555" />}
                        {node.arrow === "right" && <path d="M4.500 2v8L9 6z" fill="#555" />}
                      </TreeArrow>
                      <TreeLabel $selected={node.selected}>
                        <Icon name={node.icon} />
                        {node.label}
                      </TreeLabel>
                    </TreeRow>
                  ))}
                </Tree>
                <ScrollY>
                  <Icon name="chevronUp" size={12} />
                  <ThumbY />
                  <Icon name="chevronDown" size={12} />
                </ScrollY>
              </TreeArea>
              <ScrollX>
                <Icon name="chevronLeft" size={12} />
                <ThumbX />
                <FlipIcon>
                  <Icon name="chevronLeft" size={12} />
                </FlipIcon>
              </ScrollX>
            </Panel>
            <Canvas>
              <Model />
              <PanelHandle aria-label="Collapse panel">
                <i />
              </PanelHandle>
              <ViewBar>
                {viewTools.map((name) => (
                  <button key={name} aria-label={name}>
                    <Icon name={name} />
                  </button>
                ))}
                <StyleButton aria-label="Display style">
                  <Icon name="cube" />
                </StyleButton>
                <Caret $faint />
                <EyeGroup>
                  <button aria-label="Hide or show items">
                    <Icon name="eye" />
                  </button>
                  <button aria-label="Hide or show menu">
                    <Caret />
                  </button>
                </EyeGroup>
                <button aria-label="Edit appearance">
                  <Icon name="sphere" />
                </button>
              </ViewBar>
              <DocButtons>
                {windowTools.map((name) => (
                  <button key={name} aria-label={`${name} document`}>
                    <Icon name={name} />
                  </button>
                ))}
              </DocButtons>
              <TaskPane>
                {taskTools.map((name) => (
                  <TaskButton key={name} aria-label={name} $active={name === "sheet"}>
                    <Icon name={name} />
                  </TaskButton>
                ))}
              </TaskPane>
              <Watermark>
                <h2>Activate Windows</h2>
                <p>Go to Settings to activate Windows.</p>
              </Watermark>
            </Canvas>
          </Workspace>
          <SheetStrip>
            {["first", "prev", "next", "last"].map((name) => (
              <NavButton key={name} aria-label={`${name} sheet`} disabled>
                <Icon name={name} size={12} />
              </NavButton>
            ))}
            <SheetTab>
              <Icon name="sheetTab" size={16} />
              Sheet1
            </SheetTab>
            <AddTab aria-label="Add sheet">
              <Icon name="addSheet" size={14} />
            </AddTab>
          </SheetStrip>
        </Stack>
      </Main>

      <StatusBar>
        <StatusName>Tunanetra assy ver 2</StatusName>
        <Cell $w={75} $right>190.21mm</Cell>
        <Cell $w={75} $right>131.97mm</Cell>
        <Cell $w={44} $right>0mm</Cell>
        <Cell $w={102} $right $line>Under Defined</Cell>
        <Cell $w={8} $line />
        <Cell $w={85} $line>Editing Sheet1</Cell>
        <Cell $w={106} $line>
          1 : 2
          <UpCaret />
        </Cell>
        <Cell $w={122}>
          MMGS
          <UpCaret />
        </Cell>
        <Cell $w={55} $right>
          <Icon name="tag" size={18} />
        </Cell>
      </StatusBar>
    </Window>
  );
}

/* ---------- styles ---------- */

const GlobalStyle = createGlobalStyle`
  * {
    box-sizing: border-box;
  }
  body {
    margin: 0;
    overflow: hidden;
  }
  button, input {
    font: inherit;
    color: inherit;
    margin: 0;
    padding: 0;
    border: none;
    background: none;
    outline: none;
  }
`;

const IconSvg = styled.svg`
  display: block;
  flex: none;
  overflow: visible;
`;

const Window = styled.div`
  height: 100vh;
  display: flex;
  flex-direction: column;
  background: #f7f7f7;
  color: #111;
  font-family: "Open Sans", "Noto Sans", sans-serif;
  font-size: 11px;
  line-height: 13px;
`;

const Caret = styled.i`
  flex: none;
  width: 0;
  height: 0;
  border: 3px solid transparent;
  border-top-color: ${(p) => (p.$faint ? "#999" : "#333")};
  border-bottom: none;
  margin: ${(p) => (p.$bottom ? "auto auto 9px" : "0")};
`;

const TitleBar = styled.header`
  flex: none;
  height: 31px;
  display: flex;
  align-items: center;
  border-bottom: 1px solid #8a8a8a;
`;

const LogoBox = styled.div`
  align-self: flex-start;
  z-index: 1;
  width: 145px;
  height: 35px;
  margin-left: 10px;
  padding-left: 5px;
  display: flex;
  align-items: flex-start;
  gap: 2px;
  border: 1px solid #8a8a8a;
  border-top: none;
  background: linear-gradient(135deg, #ffffff 40%, #d9d9d9);
`;

const Brand = styled.span`
  padding-top: 9px;
  font-size: 16px;
  line-height: 20px;
  font-style: italic;
  color: #d5281f;
  b {
    font-weight: 800;
  }
`;

const Expander = styled.button`
  width: 22px;
  height: 30px;
  display: flex;
  align-items: center;
  justify-content: center;
  border-right: 2px solid #a5a5a5;
`;

const QuickBar = styled.div`
  display: flex;
  align-items: center;
  padding-left: 28px;
`;

const QuickButton = styled.button`
  width: ${(p) => (p.$single ? 26 : 22)}px;
  height: 26px;
  display: flex;
  align-items: center;
  justify-content: center;
`;

const CaretButton = styled.button`
  width: 17px;
  height: 26px;
  display: flex;
  align-items: center;
  justify-content: center;
`;

const SelectGroup = styled.div`
  display: flex;
  width: 39px;
  height: 26px;
  border: 1px solid #8f8f8f;
  button {
    display: flex;
    align-items: center;
    justify-content: center;
    width: 13px;
  }
  button:first-child {
    width: 25px;
    background: #b5b5b5;
    border-right: 1px solid #8f8f8f;
  }
`;

const DocTitle = styled.div`
  flex: 1;
  text-align: center;
  white-space: nowrap;
`;

const SearchBox = styled.div`
  width: 202px;
  height: 23px;
  display: flex;
  align-items: center;
  gap: 4px;
  padding: 0 4px;
  border: 1px solid #222;
  background: linear-gradient(90deg, #f4f5f9, #e9ebf3);
  input {
    flex: 1;
    min-width: 0;
  }
  input::placeholder {
    color: #666;
    opacity: 1;
  }
`;

const WindowButtons = styled.div`
  display: flex;
  align-items: center;
  padding-left: 4px;
  color: #444;
  button {
    display: flex;
    align-items: center;
    justify-content: center;
    width: 26px;
  }
  ${CaretButton} {
    width: 13px;
  }
`;

const Ribbon = styled.div`
  flex: none;
  display: flex;
  height: 87px;
  padding: 5px 0 2px;
  border-bottom: 1px solid #8a8a8a;
`;

const Group = styled.div`
  width: ${(p) => (p.$w ? `${p.$w}px` : "auto")};
  display: flex;
  border-right: ${(p) => (p.$last ? "none" : "1px solid #c2c2c2")};
`;

const BigTool = styled.button`
  width: ${(p) => p.$w}px;
  padding-top: ${(p) => (p.$menu ? 6 : 13)}px;
  display: flex;
  flex-direction: column;
  align-items: center;
  white-space: nowrap;
`;

const Column = styled.div`
  width: ${(p) => p.$w}px;
  padding-left: 4px;
`;

const SmallTool = styled.button`
  height: 26px;
  display: flex;
  align-items: center;
  gap: 5px;
  white-space: nowrap;
  &:disabled {
    color: #bdbdbd;
  }
`;

const TabRow = styled.div`
  flex: none;
  display: flex;
  height: 23px;
  background: #c4c6d0;
`;

const Tab = styled.button`
  flex: none;
  width: ${(p) => p.$w}px;
  height: 22px;
  white-space: nowrap;
  font-size: 12px;
  color: #333;
  background: ${(p) => (p.$active ? "#f7f7f7" : "#d3d3d3")};
  font-weight: ${(p) => (p.$active ? 600 : 400)};
  border-right: 1px solid #8a8a8a;
  border-bottom: 1px solid #8a8a8a;
`;

const TopRuler = styled.div`
  position: relative;
  flex: 1;
  height: 17px;
  margin-top: 3px;
  background: #e6e6da;
  border: 1px solid #000;
  border-left: none;
`;

const TickX = styled.i`
  position: absolute;
  left: ${(p) => p.$at}px;
  top: 6px;
  width: 1px;
  height: 3px;
  background: #000;
`;

const Split = styled.i`
  position: absolute;
  left: ${(p) => p.$at}px;
  top: 0;
  width: 2px;
  height: 100%;
  background: #222;
`;

const RulerLabel = styled.span`
  position: absolute;
  left: ${(p) => p.$at}px;
  top: 1px;
  background: #fff;
  font-family: "Liberation Sans", sans-serif;
`;

const Main = styled.main`
  flex: 1;
  min-height: 0;
  display: flex;
`;

const SideRulerWrap = styled.div`
  flex: none;
  width: 24px;
  padding: 1px 3px 0;
  background: #c4c6d0;
  border-right: 1px solid #000;
`;

const SideRuler = styled.div`
  position: relative;
  height: 100%;
  background: #e6e6da;
  border: 1px solid #000;
  border-bottom: none;
`;

const TickY = styled.i`
  position: absolute;
  top: ${(p) => p.$at}px;
  left: 6px;
  width: 3px;
  height: 1px;
  background: #000;
`;

const SplitY = styled.i`
  position: absolute;
  top: ${(p) => p.$at}px;
  left: 0;
  width: 100%;
  height: 2px;
  background: #222;
`;

const SideLabel = styled.span`
  position: absolute;
  top: ${(p) => p.$at}px;
  left: 1px;
  background: #fff;
  font-family: "Liberation Sans", sans-serif;
  writing-mode: vertical-rl;
  transform: rotate(180deg);
`;

const Stack = styled.div`
  flex: 1;
  min-width: 0;
  display: flex;
  flex-direction: column;
  border-top: 1px solid #000;
`;

const Workspace = styled.div`
  flex: 1;
  min-height: 0;
  display: flex;
`;

const Panel = styled.aside`
  flex: none;
  width: 230px;
  display: flex;
  flex-direction: column;
  padding-right: 2px;
  border-right: 1px solid #8a8a8a;
`;

const PanelGrip = styled.div`
  height: 16px;
  margin-top: 5px;
  margin-bottom: 4px;
  display: flex;
  align-items: center;
  justify-content: center;
  border-top: 1px solid #c2c2c2;
  border-bottom: 1px solid #c2c2c2;
  i {
    width: 6px;
    height: 6px;
    border-radius: 50%;
    border: 1px solid #8a8a8a;
    background: #ccc;
  }
`;

const PanelTabs = styled.div`
  display: flex;
  height: 26px;
  padding-left: 2px;
`;

const PanelTab = styled.button`
  width: 40px;
  display: flex;
  align-items: center;
  justify-content: center;
  border: 1px solid #8a8a8a;
  border-left: none;
  background: ${(p) => (p.$active ? "#f7f7f7" : "#d3d3d3")};
  border-bottom-color: ${(p) => (p.$active ? "#f7f7f7" : "#8a8a8a")};
`;

const MoreButton = styled.button`
  flex: 1;
  display: flex;
  align-items: center;
  justify-content: flex-end;
  padding-right: 3px;
  border-bottom: 1px solid #a5a5a5;
`;

const FilterBox = styled.div`
  height: 26px;
  margin: 0 3px 0 5px;
  padding-left: 2px;
  display: flex;
  align-items: center;
  border: 1px solid #c2c2c2;
  input {
    flex: 1;
    min-width: 0;
  }
`;

const TreeArea = styled.div`
  flex: 1;
  min-height: 0;
  display: flex;
`;

const Tree = styled.ul`
  flex: 1;
  min-width: 0;
  margin: 0;
  padding: 0;
  list-style: none;
  overflow: hidden;
`;

const TreeRow = styled.li`
  height: 22px;
  padding-left: ${(p) => 5 + p.$level * 23}px;
  display: flex;
  align-items: center;
  gap: 7px;
`;

const TreeArrow = styled.svg`
  flex: none;
  width: 12px;
  height: 12px;
`;

const TreeLabel = styled.span`
  height: 22px;
  padding: 0 3px 0 1px;
  display: flex;
  align-items: center;
  gap: 4px;
  white-space: nowrap;
  border: 1px solid ${(p) => (p.$selected ? "#4a90c4" : "transparent")};
  background: ${(p) => (p.$selected ? "#a5c8e4" : "none")};
`;

const ScrollY = styled.div`
  flex: none;
  width: 15px;
  padding: 4px 0 2px;
  display: flex;
  flex-direction: column;
  align-items: center;
  background: #f0f0f0;
`;

const ThumbY = styled.div`
  width: 100%;
  height: 44%;
  margin-top: 21px;
  margin-bottom: auto;
  background: #cdcdcd;
`;

const ScrollX = styled.div`
  flex: none;
  height: 20px;
  padding: 0 18px 3px 3px;
  display: flex;
  align-items: center;
  background: #f0f0f0;
  border-bottom: 1px solid #c2c2c2;
`;

const ThumbX = styled.div`
  width: 74px;
  height: 15px;
  margin-left: 3px;
  margin-right: auto;
  background: #cdcdcd;
`;

const FlipIcon = styled.span`
  transform: scaleX(-1);
`;

const Canvas = styled.section`
  position: relative;
  flex: 1;
  min-width: 0;
  background: #e6e6da;
`;

const ModelSvg = styled.svg`
  display: block;
  width: 100%;
  height: 100%;
`;

const DimText = styled.text`
  font-family: Lato, sans-serif;
  font-size: 25px;
  font-weight: 400;
  fill: #858585;
  text-anchor: middle;
`;

const PanelHandle = styled.button`
  position: absolute;
  left: -1px;
  top: 276px;
  width: 9px;
  height: 39px;
  display: flex;
  align-items: center;
  justify-content: center;
  background: #f7f7f7;
  border: 1px solid #8a8a8a;
  border-left: none;
  i {
    width: 6px;
    height: 6px;
    border-radius: 50%;
    border: 1px solid #8a8a8a;
    background: #ccc;
  }
`;

const ViewBar = styled.div`
  position: absolute;
  top: 3px;
  left: 0;
  right: 2px;
  display: flex;
  align-items: center;
  justify-content: center;
  button {
    width: 26px;
    height: 26px;
    display: flex;
    align-items: center;
    justify-content: center;
  }
`;

const StyleButton = styled.button`
  margin-right: 2px;
`;

const EyeGroup = styled.div`
  display: flex;
  margin: 0 1px 0 5px;
  border: 1px solid #8a8a8a;
  background: #d6d6d0;
  button {
    height: 24px;
    width: 12px;
  }
  button:first-child {
    width: 26px;
    background: #b5b5b2;
    border-right: 1px solid #8a8a8a;
  }
`;

const DocButtons = styled.div`
  position: absolute;
  top: 3px;
  right: 7px;
  display: flex;
  color: #96968e;
  button {
    width: 26px;
    height: 26px;
    display: flex;
    align-items: center;
    justify-content: center;
  }
`;

const TaskPane = styled.nav`
  position: absolute;
  top: 52px;
  right: 0;
  width: 26px;
  border: 1px solid #8a8a8a;
  border-right: none;
`;

const TaskButton = styled.button`
  width: 25px;
  height: 24px;
  display: flex;
  align-items: center;
  justify-content: center;
  background: ${(p) => (p.$active ? "#f7f7f7" : "#d3d3d3")};
  border-bottom: 1px solid #8a8a8a;
  &:last-child {
    border-bottom: none;
  }
`;

const Watermark = styled.div`
  position: absolute;
  right: 57px;
  bottom: 0;
  width: 236px;
  white-space: nowrap;
  color: #b4b4ab;
  h2 {
    margin: 0;
    font-size: 19px;
    line-height: 24px;
    font-weight: 400;
  }
  p {
    margin: 0;
    font-size: 14px;
    line-height: 20px;
  }
`;

const SheetStrip = styled.div`
  flex: none;
  height: 15px;
  display: flex;
  background: #f7f7f7;
`;

const NavButton = styled.button`
  width: 16px;
  display: flex;
  align-items: center;
  justify-content: center;
  background: #b5b5b5;
  border: 1px solid #a0a0a0;
`;

const SheetTab = styled.button`
  width: 79px;
  display: flex;
  align-items: center;
  justify-content: center;
  font-size: 12px;
  font-weight: 700;
  background: #fff;
  border-left: 1px solid #8a8a8a;
  border-right: 1px solid #8a8a8a;
`;

const AddTab = styled.button`
  width: 37px;
  display: flex;
  align-items: center;
  justify-content: center;
  background: #d3d3d3;
  border-right: 1px solid #8a8a8a;
`;

const StatusBar = styled.footer`
  flex: none;
  height: 21px;
  display: flex;
  border-top: 1px solid #8a8a8a;
  border-bottom: 2px solid #222;
  white-space: nowrap;
`;

const StatusName = styled.div`
  flex: 1;
  padding-left: 1px;
  display: flex;
  align-items: center;
`;

const Cell = styled.div`
  width: ${(p) => p.$w}px;
  padding-right: ${(p) => (p.$right && p.$line ? 5 : 0)}px;
  display: flex;
  align-items: center;
  justify-content: ${(p) => (p.$right ? "flex-end" : "center")};
  gap: 20px;
  border-right: ${(p) => (p.$line ? "1px solid #c2c2c2" : "none")};
`;

const UpCaret = styled.i`
  border: 3px solid transparent;
  border-bottom-color: #333;
  border-top: none;
`;
